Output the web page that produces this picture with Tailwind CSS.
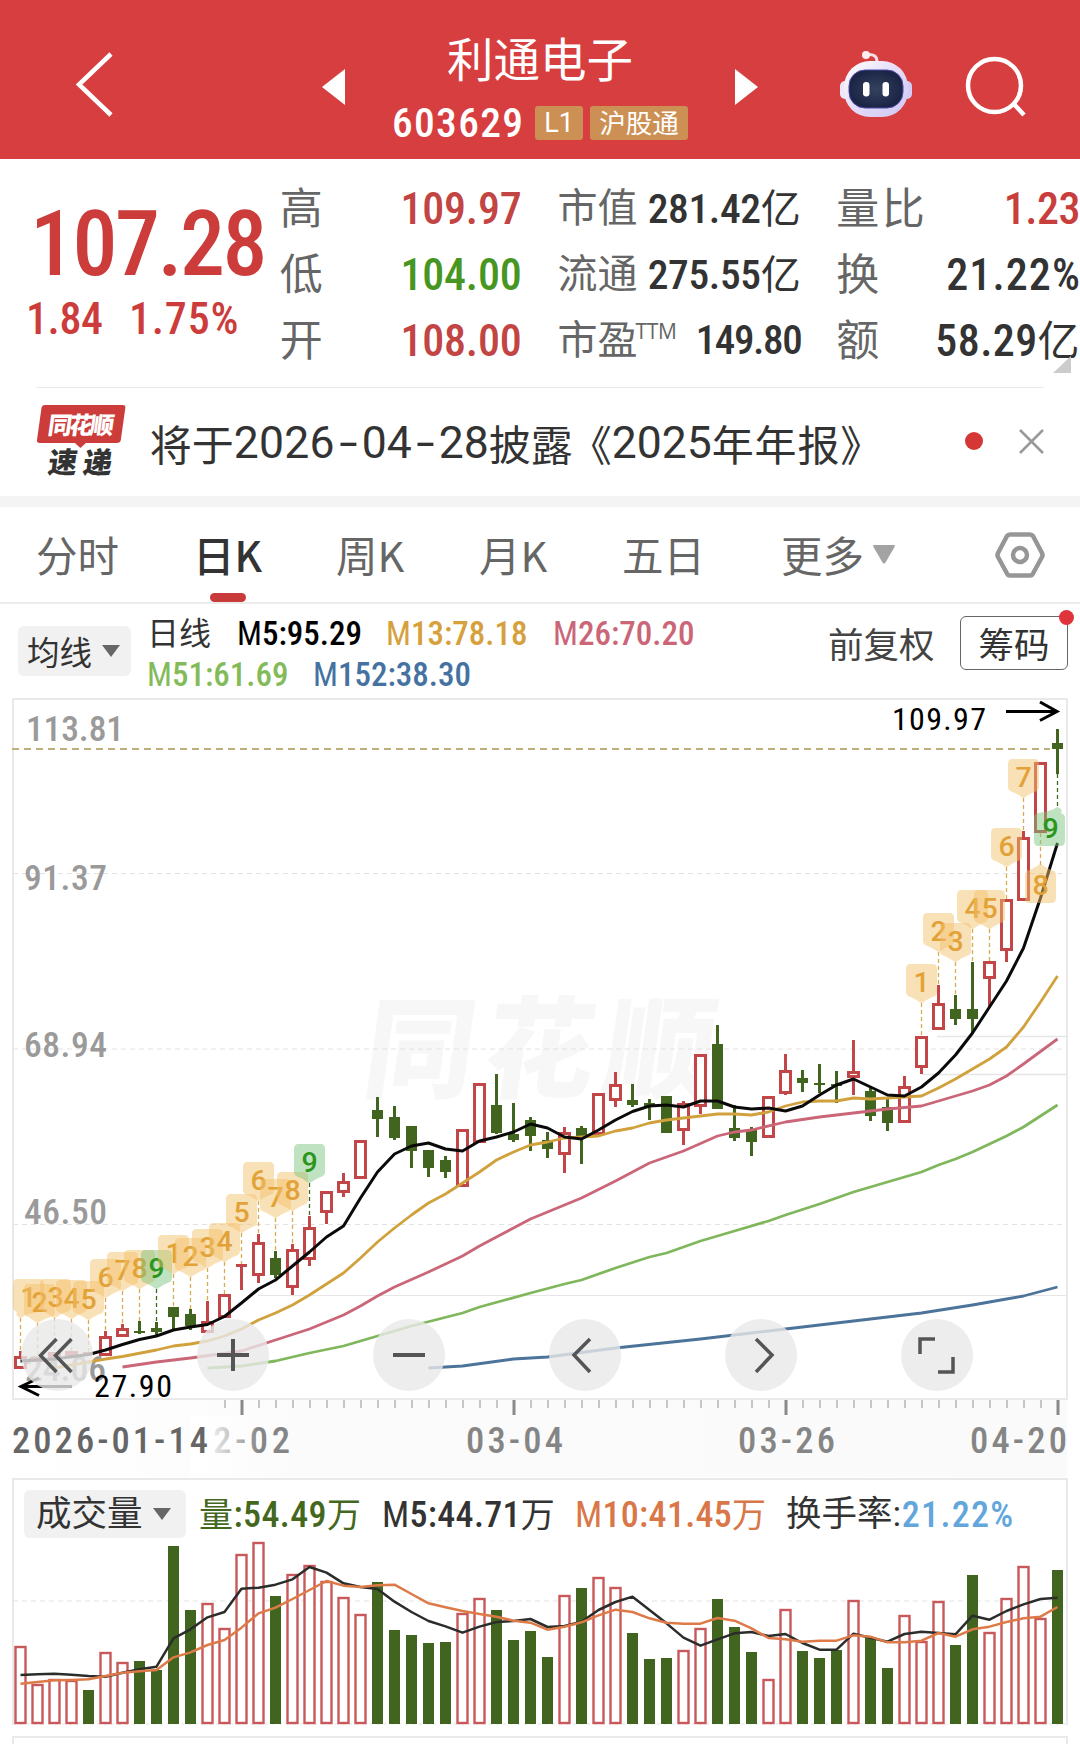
<!DOCTYPE html>
<html lang="zh-CN">
<head>
<meta charset="utf-8">
<title>利通电子 603629</title>
<script src="https://cdn.jsdelivr.net/npm/@tailwindcss/browser@4"></script>
</head>
<body class="w-[1080px] h-[1744px] overflow-hidden bg-white font-['Noto_Sans_CJK_SC',sans-serif] text-[#333]">

<header class="h-[159px] bg-[#d73e40] flex text-white">
  <div class="w-[300px] pt-[50px] pl-[74px]">
    <svg width="42" height="68" viewBox="74 50 42 68" fill="none" stroke="#fff" stroke-width="4.5"><path d="M111 54 79 84.500 111 115"/></svg>
  </div>
  <div class="w-[480px] flex justify-between px-[22px]">
    <svg class="mt-[69px]" width="23" height="36" viewBox="0 0 23 36" fill="#fff"><path d="M23 0V36L0 18Z"/></svg>
    <div class="w-[330px] flex flex-col items-center pt-[28px]">
      <h1 class="text-[46.5px] leading-[58px]">利通电子</h1>
      <div class="flex items-center gap-[7px] mt-[17px] w-[296px]">
        <span class="font-['Roboto_Condensed',sans-serif] font-medium text-[41.5px] leading-[40px] tracking-[1.3px] w-[137px] whitespace-nowrap">603629</span>
        <span class="bg-[#cd9054] rounded-[3px] h-[34px] w-[48px] text-center text-[27px] leading-[35px] font-['Roboto',sans-serif] -ml-px">L1</span>
        <span class="bg-[#cd9054] rounded-[3px] h-[34px] w-[98px] text-center text-[26.5px] leading-[32px] whitespace-nowrap">沪股通</span>
      </div>
    </div>
    <svg class="mt-[69px]" width="23" height="36" viewBox="0 0 23 36" fill="#fff"><path d="M0 0V36L23 18Z"/></svg>
  </div>
  <div class="flex-1 flex pt-[46px] pl-[56px]">
    <svg width="80" height="76" viewBox="836 46 80 76" fill="none">
      <defs>
        <linearGradient id="shell" x1="0" y1="0" x2="1" y2="1"><stop offset="0" stop-color="#fff"/><stop offset=".5" stop-color="#e4dcf8"/><stop offset="1" stop-color="#cfc6f4"/></linearGradient>
        <radialGradient id="visor"><stop offset="0" stop-color="#34425f"/><stop offset="1" stop-color="#1b2445"/></radialGradient>
      </defs>
      <path d="M867 54.500q10-1 10 7" stroke="#f6dfe4" stroke-width="3"/>
      <circle cx="866" cy="55" r="4" fill="#fbeef0"/>
      <rect x="840" y="81" width="12" height="18" rx="5" fill="#efe6fa"/>
      <rect x="900" y="81" width="12" height="18" rx="5" fill="#d5ccf5"/>
      <rect x="844" y="61" width="64" height="56" rx="26" fill="url(#shell)"/>
      <rect x="849" y="70" width="54" height="38" rx="16" fill="url(#visor)" stroke="#4a4aa8" stroke-width="1"/>
      <rect x="863" y="82" width="6.500" height="14.500" rx="3.200" fill="#fff"/>
      <rect x="882.500" y="82" width="6.500" height="14.500" rx="3.200" fill="#fff"/>
    </svg>
    <svg class="ml-[48px]" width="64" height="76" viewBox="964 46 64 76" fill="none" stroke="#fff" stroke-width="4.500"><circle cx="994.500" cy="85.500" r="26.500"/><path d="M1013 103 1024 115"/></svg>
  </div>
</header>

<section class="h-[228px] flex font-['Roboto_Condensed','Noto_Sans_CJK_SC',sans-serif] font-medium whitespace-nowrap">
  <div class="w-[280px] pt-[41px] text-[#cb3c3b]">
    <div class="pl-[30px] text-[90px] leading-[90px] tracking-[-2.5px]">107.28</div>
    <div class="pl-[26px] text-[44px] leading-[44px] mt-[7px] flex"><span class="w-[103px] tracking-[-0.4px]">1.84</span><span class="tracking-[0.8px]">1.75%</span></div>
  </div>
  <div class="w-[241px] ml-px pt-[17px] text-[44px] leading-[66px] tracking-[-0.2px]">
    <div class="flex justify-between"><span class="font-normal text-[#666] text-[43px] -ml-px">高</span><span class="text-[#c24443]">109.97</span></div>
    <div class="flex justify-between"><span class="font-normal text-[#666] text-[43px] -ml-px">低</span><span class="text-[#489622]">104.00</span></div>
    <div class="flex justify-between"><span class="font-normal text-[#666] text-[43px] -ml-px">开</span><span class="text-[#c24443]">108.00</span></div>
  </div>
  <div class="w-[243px] ml-[36px] pt-[17px] text-[41.5px] leading-[65px]">
    <div class="flex justify-between"><span class="font-normal text-[#666] text-[40px]">市值</span><span class="tracking-[-0.4px]">281.42<span class="font-normal text-[40px]">亿</span></span></div>
    <div class="flex justify-between"><span class="font-normal text-[#666] text-[40px]">流通</span><span class="tracking-[-0.4px]">275.55<span class="font-normal text-[40px]">亿</span></span></div>
    <div class="flex justify-between"><span class="font-normal text-[#666] text-[40px] flex">市盈<span class="font-['Open_Sans',sans-serif] text-[21px] leading-[47px] tracking-[-0.3px] -ml-[2px]">TTM</span></span><span class="tracking-[-1.4px] -mr-px text-[41px]">149.80</span></div>
  </div>
  <div class="w-[244px] ml-[36px] pt-[17px] text-[44px] leading-[66px] relative">
    <svg class="absolute right-[9px] top-[197px]" width="18" height="17" viewBox="0 0 18 17" fill="#ccc"><path d="M18 0V17H0Z"/></svg>
    <div class="flex justify-between"><span class="font-normal text-[#666] text-[43px] tracking-[2.5px]">量比</span><span class="text-[#c83e3d] tracking-[-0.5px]">1.23</span></div>
    <div class="flex justify-between"><span class="font-normal text-[#666] text-[43px]">换</span><span class="tracking-[1.1px] -mr-px">21.22%</span></div>
    <div class="flex justify-between"><span class="font-normal text-[#666] text-[43px]">额</span><span class="tracking-[0.4px]">58.29<span class="font-normal text-[42px]">亿</span></span></div>
  </div>
</section>

<section class="h-[109px] mx-[36px] border-t border-[#e8e8e8] flex items-start">
  <svg class="mt-[15px]" width="92" height="76" viewBox="36 403 92 76">
    <path d="M45 405H123Q126 405 125.500 408L121 440Q120.500 443 117 443H86L80.500 448 75 443H40Q36.500 443 37 440L41.500 408Q42 405 45 405Z" fill="#cb3c3b"/>
    <text transform="translate(47 433.500) skewX(-8)" font-family="Noto Sans CJK SC" font-weight="900" font-size="24" fill="#fff" textLength="66">同花顺</text>
    <text transform="translate(47 473.500) skewX(-8)" font-family="Noto Sans CJK SC" font-weight="900" font-size="29" fill="#333" textLength="64">速递</text>
  </svg>
  <div class="ml-[22px] mt-[23px] text-[42px] leading-[64px] whitespace-nowrap flex w-[790px]">将于<span class="font-['Roboto',sans-serif] text-[44.5px] flex"><span class="tracking-[0.2px]">2026</span><span class="w-[27px] text-center scale-x-150">-</span>04<span class="w-[27px] text-center scale-x-150">-</span>28</span>披露<span class="-ml-[3px]">《</span><span class="font-['Roboto',sans-serif] text-[44.5px]">2025</span><span class="tracking-[0.8px]">年年报》</span></div>
  <div class="w-[18px] h-[18px] rounded-full bg-[#d43735] mt-[44px] ml-[27px]"></div>
  <svg class="mt-[41px] ml-[36px]" width="25" height="25" viewBox="0 0 25 25" stroke="#999" stroke-width="2.600"><path d="M1 1 24 24M24 1 1 24"/></svg>
</section>
<div class="h-[11px] bg-[#f4f4f4]"></div>

<nav class="h-[97px] border-b-2 border-[#ececec] flex text-[41.5px] leading-[94px] text-[#666] whitespace-nowrap">
  <span class="ml-[36px] w-[157px]">分时</span>
  <span class="w-[143px] text-[#333] font-medium relative">日K<i class="absolute left-[17px] bottom-0 w-[36px] h-[9px] rounded-full bg-[#c93a3a]"></i></span>
  <span class="w-[143px]">周K</span>
  <span class="w-[143px]">月K</span>
  <span class="w-[159px]">五日</span>
  <span class="w-[92px]">更多</span>
  <svg class="mt-[38px]" width="22" height="19" viewBox="0 0 22 19" fill="#a3a3a3"><path d="M1 0H21Q22.500 0 21.500 2L12.500 17.500Q11 19.500 9.500 17.500L.5 2Q-.5 0 1 0Z"/></svg>
  <svg class="mt-[22px] ml-[99px]" width="52" height="52" viewBox="994 529 52 52" fill="none" stroke="#969696" stroke-width="4.500" stroke-linejoin="round"><path d="M1010 534.500H1030Q1032 534.500 1033 536L1042 553Q1043 555 1042 557L1033 573.500Q1032 575.500 1030 575.500H1010Q1008 575.500 1007 573.500L998 557Q997 555 998 553L1007 536Q1008 534.500 1010 534.500Z"/><circle cx="1020" cy="555" r="7"/></svg>
</nav>

<section class="h-[93px] flex whitespace-nowrap">
  <div class="ml-[18px] mt-[22px] w-[113px] h-[50px] rounded-[6px] bg-[#f1f1f1] flex items-center pl-[9px] pb-px text-[32.5px] leading-[48px]">均线
    <svg class="ml-[10px]" width="18" height="12" viewBox="0 0 18 12" fill="#666"><path d="M0 0H18L9 12Z"/></svg>
  </div>
  <div class="ml-[16px] mt-[9px] w-[681px] font-['Roboto_Condensed',sans-serif] font-medium text-[33px] leading-[41px]">
    <div class="flex"><span class="w-[90px] font-['Noto_Sans_CJK_SC',sans-serif] font-normal text-[32px] leading-[37px]">日线</span><span class="w-[149px] text-black"><span class="font-normal">M</span>5:95.29</span><span class="w-[167px] text-[#d6a03d]"><span class="font-normal">M</span>13:78.18</span><span class="text-[#cb6679]"><span class="font-normal">M</span>26:70.20</span></div>
    <div class="flex text-[#84bb5a]"><span class="w-[166px]"><span class="font-normal">M</span>51:61.69</span><span class="text-[#4572a1]"><span class="font-normal">M</span>152:38.30</span></div>
  </div>
  <span class="w-[132px] text-[35.5px] leading-[78px] text-[#444]">前复权</span>
  <div class="relative mt-[12px] w-[108px] h-[54px] border border-[#666] rounded-[6px] text-center text-[35.5px] leading-[52px]">筹码<i class="absolute w-[15px] h-[15px] rounded-full bg-[#e0343c] -right-[7px] -top-[7px]"></i></div>
</section>

<section class="relative h-[780px]">
  <svg id="price" class="block" width="1080" height="780" viewBox="0 697 1080 780"></svg>
  <div class="absolute left-[21px] top-[622px] flex gap-[104px]">
    <button class="w-[72px] h-[72px] rounded-full bg-[#e8e8e8]/80"><svg class="block" width="72" height="72" viewBox="21 1319 72 72" fill="none" stroke="#555" stroke-width="3.500"><path d="M56.500 1339 40.500 1355.500 56.500 1372M71.500 1339 55.500 1355.500 71.500 1372"/></svg></button>
    <button class="w-[72px] h-[72px] rounded-full bg-[#e8e8e8]/80"><svg class="block" width="72" height="72" fill="none" stroke="#555" stroke-width="4"><path d="M20 36H52M36 20V52"/></svg></button>
    <button class="w-[72px] h-[72px] rounded-full bg-[#e8e8e8]/80"><svg class="block" width="72" height="72" fill="none" stroke="#555" stroke-width="4"><path d="M20 36H52"/></svg></button>
    <button class="w-[72px] h-[72px] rounded-full bg-[#e8e8e8]/80"><svg class="block" width="72" height="72" fill="none" stroke="#555" stroke-width="3.500"><path d="M41 20 25 36 41 53"/></svg></button>
    <button class="w-[72px] h-[72px] rounded-full bg-[#e8e8e8]/80"><svg class="block" width="72" height="72" fill="none" stroke="#555" stroke-width="3.500"><path d="M31 20 47 36 31 53"/></svg></button>
    <button class="w-[72px] h-[72px] rounded-full bg-[#e8e8e8]/80"><svg class="block" width="72" height="72" fill="none" stroke="#555" stroke-width="3.500"><path d="M19 35V20H34M37 53H52V38"/></svg></button>
  </div>
</section>

<section class="relative h-[267px]">
  <svg id="volume" class="block" width="1080" height="267" viewBox="0 1477 1080 267"></svg>
  <div class="absolute left-[24px] top-[13px] h-[48px] flex items-center whitespace-nowrap font-['Roboto_Condensed','Noto_Sans_CJK_SC',sans-serif] text-[36px] leading-[46px] font-medium">
    <div class="w-[162px] h-[48px] rounded-[6px] bg-[#f1f1f1] flex items-center pl-[12px] font-normal text-[35.5px]">成交量
      <svg class="ml-[10px]" width="18" height="12" viewBox="0 0 18 12" fill="#666"><path d="M0 0H18L9 12Z"/></svg>
    </div>
    <span class="ml-[13px] w-[183px] text-[#44671e] tracking-[0.4px] mt-[2px]"><span class="font-normal text-[34px]">量</span>:54.49<span class="font-normal text-[34px]">万</span></span>
    <span class="w-[193px] tracking-[0.3px] mt-[2px]"><span class="font-normal">M</span>5:44.71<span class="font-normal text-[34px]">万</span></span>
    <span class="w-[211px] text-[#d97748] tracking-[0.3px] mt-[2px]"><span class="font-normal">M</span>10:41.45<span class="font-normal text-[34px]">万</span></span>
    <span class="font-normal text-[35.5px]">换手率:</span><span class="text-[#62a6dc] tracking-[1.3px] mt-[2px] ml-px">21.22%</span>
  </div>
</section>

<script>
const RED = '#c24648', GREEN = '#41651f';
const X = i => 20.5 + 17 * i;
const line = (x1, y1, x2, y2, c, w, dash) => `<line x1="${x1}" y1="${y1}" x2="${x2}" y2="${y2}" stroke="${c}" stroke-width="${w}"${dash ? ` stroke-dasharray="${dash}"` : ''}/>`;
const text = (s, x, y, w, size, c, weight = 400) => `<text x="${x}" y="${y}" textLength="${w}" font-family="Roboto Condensed, sans-serif" font-size="${size}" font-weight="${weight}" fill="${c}">${s}</text>`;
const curve = (pts, c, w) => `<polyline fill="none" stroke="${c}" stroke-width="${w}" stroke-linejoin="round" points="${pts.map(([i, y]) => X(i) + ',' + y).join(' ')}"/>`;

// direction, body top, body bottom, wick top, wick bottom
const candles = [
  ['r',1356,1369,1351],['r',1357,1362],['r',1352,1358],['r',1351,1357],['r',1352,1355],['r',1336,1356,1331],['r',1328,1337,1324],['g',1331,1333,1321,1334],['g',1328,1332,1322,1335],['g',1307,1317,1307,1329],
  ['g',1314,1326,1309,1330],['r',1321,1333,1301],['r',1294,1318],['r',1264,1267,1264,1290],['r',1242,1276,1234,1283],['g',1258,1275,1251,1278],['r',1249,1288,1244,1295],['r',1227,1260,1216,1266],['r',1191,1213,1191,1224],['r',1181,1193,1173,1197],
  ['r',1140,1179],['g',1110,1119,1097,1137],['g',1117,1138,1106,1140],['g',1126,1151,1126,1168],['g',1150,1168,1150,1177],['g',1160,1172,1156,1178],['r',1129,1187],['r',1083,1143],['g',1105,1133,1074,1134],['g',1134,1140,1103,1142],
  ['g',1120,1136,1117,1151],['g',1140,1149,1132,1158],['r',1132,1155,1127,1173],['g',1128,1137,1126,1164],['r',1093,1135],['r',1084,1101,1072,1107],['g',1100,1105,1084,1107],['g',1103,1106,1099,1120],['g',1096,1133],['r',1103,1131,1101,1145],
  ['r',1054,1107,1054,1114],['g',1044,1109,1025,1109],['g',1128,1138,1105,1141],['g',1130,1142,1127,1156],['r',1096,1138],['r',1070,1094,1054,1095],['g',1078,1083,1070,1092],['g',1083,1085,1064,1093],['g',1084,1086,1071,1103],['r',1071,1078,1040,1095],
  ['g',1091,1116,1088,1121],['g',1107,1123,1098,1131],['r',1086,1123,1076],['r',1036,1068,1036,1074],['r',1003,1030,985],['g',1009,1019,995,1025],['g',1009,1019,962,1032],['r',961,979,961,1007],['r',899,951,899,962],['r',837,901,831],
  ['r',762,833],['g',743,749,729,774]];
const ma5 = [[0,1361],[2,1359],[4,1354.5],[5,1350],[6,1344.500],[7,1339.5],[8,1336],[9,1330],[10,1327],[11,1324.5],[12,1316.5],[13,1303],[14,1289],[15,1280],[16,1266],[17,1252],[18,1237],[19,1226],[20,1198],[21,1172],[22,1154],[23,1146],[24,1143],[25,1149],[26,1151],[27,1141],[28,1137],[29,1132],[30,1124],[31,1128],[32,1137],[33,1139],[34,1130],[35,1120],[36,1111.5],[37,1106],[38,1105],[39,1107],[40,1101],[41,1101],[42,1107],[43,1109],[44,1108],[45,1111],[46,1106],[47,1095],[48,1085],[49,1079],[50,1087],[51,1095],[52,1096],[53,1087],[54,1073],[55,1055],[56,1033],[57,1007],[58,981],[59,948],[60,898],[61,843]];
const ma13 = [[2,1368],[4,1362],[5,1359],[6,1356.5],[8,1350],[9,1346],[10,1344],[11,1341],[12,1336],[13,1329],[14,1320],[15,1313],[16,1305],[17,1295],[18,1284],[19,1273],[20,1258],[21,1242],[22,1228],[23,1215],[24,1203],[25,1194],[26,1183],[27,1172],[28,1160],[29,1152],[30,1145],[31,1142],[32,1138],[33,1137],[34,1136],[35,1131],[36,1128],[37,1123],[38,1120],[39,1118],[40,1116],[41,1114],[42,1114],[43,1115],[44,1112],[45,1106],[46,1102],[47,1101],[48,1101],[49,1098],[50,1099],[51,1098],[52,1097],[53,1096],[54,1088],[55,1079],[56,1069],[57,1059],[58,1047],[59,1027],[60,1002],[61,976]];
const ma26 = [[6,1367],[8,1362],[10,1358],[13,1351],[15,1340],[17,1329],[19,1315],[20,1306],[21,1296],[22,1287],[24,1272],[26,1256],[27,1246],[28,1237],[30,1219],[32,1205],[33,1198],[35,1181],[37,1163],[39,1151],[41,1136],[42,1132],[43,1130],[45,1122],[47,1117],[49,1113],[51,1109],[53,1106],[54,1101],[55,1096],[56,1091],[57,1085],[58,1076],[59,1064],[61,1039]];
const ma51 = [[11,1368],[13,1366],[15,1361],[17,1353],[19,1346],[21,1336],[23,1326],[26,1313],[27,1307],[30,1293],[32,1284],[33,1280],[35,1268],[37,1257],[38,1253],[40,1241],[42,1231],[44,1221],[45,1215],[47,1204],[49,1192],[51,1182],[53,1172],[54,1165],[55,1159],[56,1152],[57,1144],[58,1136],[59,1127],[61,1105]];
const ma152 = [[24,1368],[26,1366],[29,1359],[31,1357],[35,1348],[40,1339],[45,1329],[49,1321],[53,1313],[56,1305],[57,1302],[59,1296],[61,1287]];
// digit, candle index, top of label, end of leader, side, x shift
const marks = [[1,0,1279,1351,0,8],[2,1,1284,1356,0,2],[3,2,1279,1352,0,1],[4,3,1280,1351,0,0],[5,4,1281,1352,0,0],[6,5,1259,1331],[7,6,1252,1324],[8,7,1250,1321],[9,8,1250,1322],[1,9,1235,1307],[2,10,1238,1309],[3,11,1229,1301],[4,12,1223,1294],[5,13,1194,1264],[6,14,1162,1234],[7,15,1179,1251],[8,16,1172,1244],[9,17,1144,1216],[1,53,964,1036],[2,54,913,985],[3,55,923,995],[4,56,890,962],[5,57,890,961],[6,58,828,899],[7,59,759,831],[8,60,903,833,1],[9,61,846,774,1,-8]];

let s = `<defs><linearGradient id="band"><stop offset="0" stop-color="#fff"/><stop offset=".3" stop-color="#fbfbfb"/><stop offset="1" stop-color="#fafafa"/></linearGradient><linearGradient id="fade" gradientUnits="userSpaceOnUse" x1="190" x2="290" y1="0" y2="0"><stop offset="0" stop-color="#fff" stop-opacity="1"/><stop offset=".25" stop-color="#fff" stop-opacity=".8"/><stop offset=".7" stop-color="#fff" stop-opacity="0"/></linearGradient></defs>`;
s += `<rect x="13" y="1400" width="1054" height="77" fill="url(#band)"/>`;
s += `<text transform="translate(360 1089) skewX(-8)" font-family="Noto Sans CJK SC" font-weight="900" font-size="110" textLength="350" fill="#f7f7f7">同花顺</text>`;
for (const y of [873.5, 1049, 1224.5]) s += line(13, y, 1067, y, '#e2e2e2', 1, '5 4');
s += line(937, 1036.5, 1067, 1036.5, '#e6e6e6', 1.5) + line(922, 1074.5, 1067, 1074.5, '#e6e6e6', 1.5) + line(258, 1295.500, 1067, 1295.500, '#e6e6e6', 1);
s += `<rect x="13" y="699" width="1054" height="700" fill="none" stroke="#e9e9e9" stroke-width="2"/>`;
s += line(12, 749, 1050, 749, '#bdb07c', 2, '7 5');
s += text('113.81', 26, 741, 98, 35.5, '#9a9a9a', 500) + text('91.37', 24, 890, 83, 35.5, '#9a9a9a', 500) + text('68.94', 24, 1057, 83, 35.5, '#9a9a9a', 500) + text('46.50', 24, 1224, 83, 35.5, '#9a9a9a', 500) + text('24.06', 25, 1381, 81, 35.5, '#9a9a9a', 500);
for (const [, i, top, end, low] of marks) s += low ? line(X(i), end, X(i), top - 38, i === 61 ? '#3f6a20' : '#d8ad52', 1.3, '4 3') : line(X(i), top + 39, X(i), end, i === 8 || i === 17 ? '#3f6a20' : '#d8ad52', 1.3, '4 3');
candles.forEach(([d, t, b, wt = t, wb = b], i) => {
  const x = X(i);
  if (d === 'g') s += line(x, wt, x, wb, GREEN, 3) + `<rect x="${x - 5.500}" y="${t}" width="11" height="${b - t}" fill="${GREEN}"/>`;
  else {
    if (wt < t) s += line(x, wt, x, t, RED, 3);
    if (wb > b) s += line(x, b, x, wb, RED, 3);
    s += b - t < 4 ? `<rect x="${x - 5.500}" y="${t}" width="11" height="${b - t}" fill="${RED}"/>` : `<rect x="${x - 5}" y="${t + 1.5}" width="10" height="${b - t - 3}" fill="#fff" stroke="${RED}" stroke-width="3"/>`;
  }
});
s += curve(ma152, '#4c7399', 2.800) + curve(ma51, '#80b75c', 2.800) + curve(ma26, '#cb6678', 2.800) + curve(ma13, '#d0a13c', 2.800) + curve(ma5, '#0a0a0a', 3);
for (const [n, i, top, , low, dx = 0] of marks) {
  const x = X(i) + dx, g = n === 9, p = X(i), k = low ? -1 : 1;
  s += `<g transform="translate(${x} ${top}) scale(1 ${k})"><path d="M-11 0H11Q15.500 0 15.500 5V28Q15.500 32 11 33Q${p - x + 6} 35 ${p - x + 2} 38Q${p - x} 40 ${p - x - 2} 38Q${p - x - 6} 35-11 33Q-15.500 32-15.500 28V5Q-15.500 0-11 0Z" fill="${g ? '#79c27c' : '#f3c069'}" fill-opacity=".48"/></g>`;
  s += `<text x="${i === 61 ? p - 7 : x}" y="${low ? top - 8 : top + 28}" text-anchor="middle" font-family="Roboto, sans-serif" font-size="28.5" font-weight="500" fill="${g ? '#2b951d' : '#e2a237'}">${n}</text>`;
}
s += text('109.97', 892, 730, 94, 32, '#000') + text('27.90', 94, 1397, 78, 32, '#000');
s += `<path d="M1006 711.500H1057M1040 702 1057 711.500 1040 720.500M72 1386.500H21M39 1378 21 1386.500 39 1395.500" fill="none" stroke="#000" stroke-width="3"/>`;
for (let i = 12; i < 62; i++) { const m = (i - 13) % 16 === 0; s += line(X(i) + .5, 1400, X(i) + .5, m ? 1415 : 1408, m ? '#8a8a8a' : '#c6c6c6', m ? 3 : 2); }
s += text('2-02', 213, 1453, 77, 36.5, '#858585', 500) + text('03-04', 466, 1453, 97, 36.5, '#858585', 500) + text('03-26', 738, 1453, 97, 36.5, '#858585', 500) + text('04-20', 970, 1453, 97, 36.5, '#858585', 500);
s += `<rect x="190" y="1416" width="100" height="60" fill="url(#fade)"/>` + text('2026-01-14', 12, 1453, 196, 36.5, '#666', 500);
document.getElementById('price').innerHTML = s;

const vol = 'r1647 r1685 r1680 r1681 g1690 r1653 r1663 g1661 g1670 g1546 g1610 r1604 r1629 r1555 r1543 g1596 r1575 r1566 r1582 r1598 r1615 g1582 g1630 g1635 g1643 g1642 r1614 r1599 g1610 g1640 g1631 g1657 r1596 g1588 r1578 r1588 g1633 g1659 g1658 r1651 r1629 g1599 g1627 g1652 r1680 r1610 g1651 g1658 g1650 r1601 g1637 g1668 r1616 r1642 r1602 g1645 g1575 r1633 r1599 r1567 r1619 g1570'.split(' ');
const v5 = [645,643,641,644,648,650,638,628,620,535,508,472,456,386,383,374,358,321,338,370,381,387,425,456,483,499,518,500,486,483,477,501,498,485,450,426,410,450,490,533,557,538,520,516,528,522,549,569,569,521,533,545,522,515,519,523,467,479,453,433,417,413];
const v10 = [671,666,661,660,658,648,638,634,630,592,577,555,540,503,460,443,417,390,363,377,381,376,374,402,430,442,453,462,470,482,488,509,500,487,466,449,456,475,488,491,491,474,482,505,534,538,545,542,542,526,530,547,547,542,519,530,508,500,486,475,470,441];
let v = `<rect x="13" y="1479" width="1054" height="245" fill="none" stroke="#e9e9e9" stroke-width="2"/><line x1="14" x2="1066" y1="1724" y2="1724" stroke="#fff" stroke-width="3"/>`;
v += line(13, 1601, 1067, 1601, '#e4e4e4', 1.2, '5 4') + line(13, 1724, 1067, 1724, '#e4e4e4', 1, '3 4') + `<rect x="13" y="1737" width="1054" height="30" fill="none" stroke="#e9e9e9" stroke-width="2"/>`;
vol.forEach((e, i) => {
  const y = +e.slice(1), x = X(i);
  v += e[0] === 'g' ? `<rect x="${x - 5.500}" y="${y}" width="11" height="${1724 - y}" fill="${GREEN}"/>` : `<rect x="${x - 5}" y="${y}" width="10" height="${1723 - y}" fill="#fff" stroke="${RED}" stroke-opacity=".9" stroke-width="2.400"/>`;
});
v += curve(v5.map((y, i) => [i, 1460 + y / 3]), '#2b2d2b', 2.500) + curve(v10.map((y, i) => [i, 1460 + y / 3]), '#dd7a47', 2.500);
document.getElementById('volume').innerHTML = v;
</script>
</body>
</html>
